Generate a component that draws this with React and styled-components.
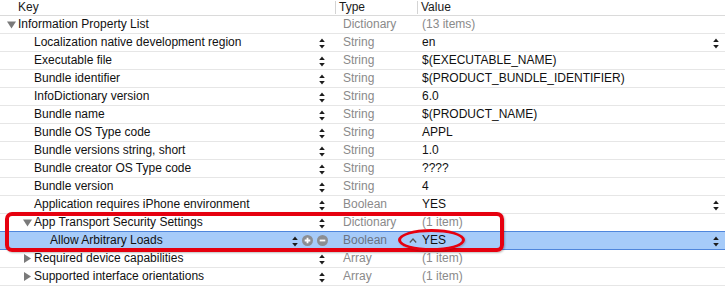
import React from "react";
import styled, { createGlobalStyle } from "styled-components";

const Global = createGlobalStyle`
  html, body { margin: 0; padding: 0; background: #fff; }
  body { font-family: "Liberation Sans", Arial, sans-serif; font-size: 12px; color: #111; }
`;

const COLS = "336px 82px 1fr";

const Table = styled.div`
  position: relative;
  width: 725px;
  height: 305px;
  background: #fff;
  overflow: hidden;
`;

const HeaderRow = styled.div`
  display: grid;
  grid-template-columns: ${COLS};
  height: 15px;
  border-bottom: 1px solid #dadada;
`;

const HeaderCell = styled.div`
  position: relative;
  line-height: 15px;
  padding-left: ${(p) => p.$pad}px;
  color: #1a1a1a;
  ${(p) =>
    p.$sep &&
    `&::before { content: ""; position: absolute; left: -1px; top: 1px; width: 1px; height: 13px; background: #d4d4d4; }`}
`;

const Row = styled.div`
  display: grid;
  grid-template-columns: ${COLS};
  height: 17px;
  border-bottom: 1px solid ${(p) => (p.$selected ? "#4f86dc" : "#e6e6e6")};
  background: ${(p) => (p.$selected ? "#a6cbf9" : "#fff")};
  box-shadow: ${(p) => (p.$selected ? "0 -1px 0 #4f86dc" : "none")};
  line-height: 17px;
`;

const KeyCell = styled.div`
  display: flex;
  align-items: center;
  padding-left: ${(p) => 2 + p.$depth * 16}px;
  padding-right: 8px;
  min-width: 0;
`;

const Toggle = styled.div`
  width: 16px;
  height: 17px;
  flex: none;
  display: flex;
  align-items: center;
  justify-content: flex-end;
  padding-right: ${(p) => (p.$open ? 2 : 3)}px;
  box-sizing: border-box;
`;

const KeyText = styled.span`
  flex: 1;
  white-space: nowrap;
  color: #111;
`;

const Controls = styled.div`
  display: flex;
  align-items: center;
  gap: 4px;
`;

const StepperBox = styled.svg`
  display: block;
  flex: none;
  margin-right: ${(p) => (p.$trail ? 3 : 0)}px;
  margin-top: 2px;
`;

const RoundBtn = styled.svg`
  display: block;
  flex: none;
`;

const TypeCell = styled.div`
  padding-left: 7px;
  color: ${(p) => (p.$selected ? "#6a7383" : "#8a8a8a")};
  white-space: nowrap;
`;

const ValueCell = styled.div`
  display: flex;
  align-items: center;
  padding-left: ${(p) => (p.$chevron ? 0 : 4)}px;
  padding-right: 6px;
  color: ${(p) => (p.$muted ? "#8a8a8a" : "#111")};
  white-space: nowrap;
`;

const ValueText = styled.span`
  flex: 1;
`;

const Chevron = styled.svg`
  display: block;
  flex: none;
  margin-left: -13px;
  margin-right: 5px;
`;

const RedBox = styled.div`
  position: absolute;
  left: 5px;
  top: 212px;
  width: 499px;
  height: 40px;
  box-sizing: border-box;
  border: 4px solid #e6000f;
  border-radius: 7px;
  box-shadow: 1px 1px 2px rgba(0, 0, 0, 0.25);
  pointer-events: none;
`;

const RedEllipse = styled.div`
  position: absolute;
  left: 398px;
  top: 229px;
  width: 67px;
  height: 22px;
  box-sizing: border-box;
  border: 3.5px solid #e6000f;
  border-radius: 50%;
  box-shadow: 1px 1px 2px rgba(0, 0, 0, 0.2);
  pointer-events: none;
`;

const Stepper = ({ trail }) => (
  <StepperBox $trail={trail} width="6" height="11" viewBox="0 0 6 11">
    <path d="M3 0.5 L5.8 4 L0.2 4 Z" fill="#1c1c1c" />
    <path d="M3 10.5 L5.8 7 L0.2 7 Z" fill="#1c1c1c" />
  </StepperBox>
);

const Plus = () => (
  <RoundBtn width="11" height="11" viewBox="0 0 11 11">
    <circle cx="5.5" cy="5.5" r="5.5" fill="#8b8e93" />
    <path d="M2.7 5.5 H8.3 M5.5 2.7 V8.3" stroke="#fff" strokeWidth="1.8" />
  </RoundBtn>
);

const Minus = () => (
  <RoundBtn width="11" height="11" viewBox="0 0 11 11">
    <circle cx="5.5" cy="5.5" r="5.5" fill="#8b8e93" />
    <path d="M2.7 5.5 H8.3" stroke="#fff" strokeWidth="1.8" />
  </RoundBtn>
);

const Disclosure = ({ open }) =>
  open ? (
    <svg width="9" height="8" viewBox="0 0 9 8" style={{ display: "block" }}>
      <path d="M0 0.5 H9 L4.5 7.5 Z" fill="#7a7a7a" />
    </svg>
  ) : (
    <svg width="7" height="9" viewBox="0 0 7 9" style={{ display: "block" }}>
      <path d="M0 0 L7 4.5 L0 9 Z" fill="#7a7a7a" />
    </svg>
  );

const rows = [
  { key: "Information Property List", depth: 0, toggle: "open", type: "Dictionary", value: "(13 items)", muted: true, noStep: true },
  { key: "Localization native development region", depth: 1, type: "String", value: "en", vStep: true },
  { key: "Executable file", depth: 1, type: "String", value: "$(EXECUTABLE_NAME)" },
  { key: "Bundle identifier", depth: 1, type: "String", value: "$(PRODUCT_BUNDLE_IDENTIFIER)" },
  { key: "InfoDictionary version", depth: 1, type: "String", value: "6.0" },
  { key: "Bundle name", depth: 1, type: "String", value: "$(PRODUCT_NAME)" },
  { key: "Bundle OS Type code", depth: 1, type: "String", value: "APPL" },
  { key: "Bundle versions string, short", depth: 1, type: "String", value: "1.0" },
  { key: "Bundle creator OS Type code", depth: 1, type: "String", value: "????" },
  { key: "Bundle version", depth: 1, type: "String", value: "4" },
  { key: "Application requires iPhone environment", depth: 1, type: "Boolean", value: "YES", vStep: true },
  { key: "App Transport Security Settings", depth: 1, toggle: "open", type: "Dictionary", value: "(1 item)", muted: true },
  { key: "Allow Arbitrary Loads", depth: 2, type: "Boolean", value: "YES", vStep: true, selected: true, chevron: true },
  { key: "Required device capabilities", depth: 1, toggle: "closed", type: "Array", value: "(1 item)", muted: true },
  { key: "Supported interface orientations", depth: 1, toggle: "closed", type: "Array", value: "(1 item)", muted: true },
];

export default function App() {
  return (
    <>
      <Global />
      <Table>
        <HeaderRow>
          <HeaderCell $pad={18}>Key</HeaderCell>
          <HeaderCell $pad={3} $sep>Type</HeaderCell>
          <HeaderCell $pad={3} $sep>Value</HeaderCell>
        </HeaderRow>
        {rows.map((r, i) => (
          <Row key={i} $selected={r.selected}>
            <KeyCell $depth={r.depth ? r.depth - (r.depth >= 1 ? 0 : 0) : 0}>
              <Toggle $open={r.toggle === "open"}>
                {r.toggle && <Disclosure open={r.toggle === "open"} />}
              </Toggle>
              <KeyText>{r.key}</KeyText>
              {!r.noStep && (
                <Controls>
                  <Stepper trail={!r.selected} />
                  {r.selected && <Plus />}
                  {r.selected && <Minus />}
                </Controls>
              )}
            </KeyCell>
            <TypeCell $selected={r.selected}>{r.type}</TypeCell>
            <ValueCell $muted={r.muted} $chevron={false}>
              {r.chevron && (
                <Chevron width="8" height="5" viewBox="0 0 8 5">
                  <path d="M0.8 4.5 L4 1 L7.2 4.5" fill="none" stroke="#555" strokeWidth="1.2" />
                </Chevron>
              )}
              <ValueText>{r.value}</ValueText>
              {r.vStep && <Stepper />}
            </ValueCell>
          </Row>
        ))}
        <RedBox />
        <RedEllipse />
      </Table>
    </>
  );
}
